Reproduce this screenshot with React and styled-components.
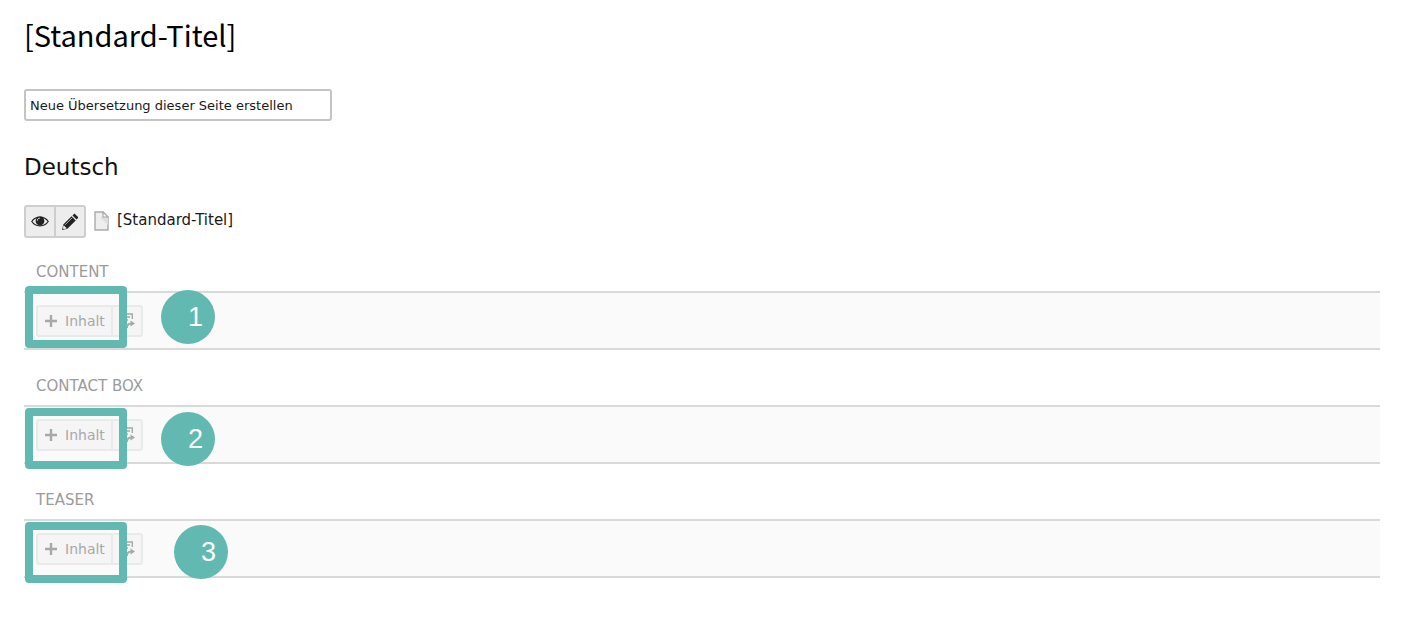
import styled, { createGlobalStyle, ThemeProvider } from 'styled-components';

const theme = {
  text: '#1a1a1a',
  muted: '#9b9b9b',
  border: '#c4c4c4',
  line: '#d9d9d9',
  accent: '#61b9b1',
};

const GlobalStyle = createGlobalStyle`
  * {
    box-sizing: border-box;
  }

  body {
    background: #fff;
    color: ${theme.text};
    font-family: 'DejaVu Sans', Verdana, sans-serif;
    margin: 0;
  }
`;

const Page = styled.main`
  padding: 12px 42px 40px 24px;
`;

const Title = styled.h1`
  color: #000;
  font-family: 'Noto Sans CJK SC', sans-serif;
  font-size: 29px;
  font-weight: 400;
  line-height: 44px;
  margin: 0 0 33px;
`;

const LanguageSelect = styled.select`
  appearance: none;
  background: #fff;
  border: 2px solid ${({ theme }) => theme.border};
  border-radius: 3px;
  color: ${({ theme }) => theme.text};
  display: block;
  font-family: inherit;
  font-size: 13px;
  height: 32px;
  padding: 0 4px;
  width: 308px;
`;

const LanguageHeading = styled.h2`
  color: #111;
  font-size: 23px;
  font-weight: 400;
  line-height: 32px;
  margin: 30px 0 22px;
`;

const RecordRow = styled.div`
  align-items: center;
  display: flex;
  gap: 8px;
  margin-bottom: 18px;
`;

const RecordTitle = styled.span`
  font-size: 15px;
  line-height: 20px;
  padding-bottom: 4px;
`;

const ButtonGroup = styled.div`
  background: ${({ $muted }) => ($muted ? '#f5f5f5' : '#ededed')};
  border: 2px solid ${({ $muted }) => ($muted ? '#eaeaea' : '#cecece')};
  border-radius: 3px;
  display: inline-flex;
  height: ${({ $muted }) => ($muted ? 32 : 33)}px;

  button + button {
    border-left: 2px solid ${({ $muted }) => ($muted ? '#eaeaea' : '#cecece')};
  }
`;

const Button = styled.button`
  align-items: center;
  background: transparent;
  border: 0;
  color: ${({ $muted }) => ($muted ? '#a8a8a8' : '#222')};
  display: flex;
  font-family: inherit;
  font-size: ${({ $muted }) => ($muted ? 14 : 13)}px;
  gap: 7px;
  justify-content: center;
  padding: 0 ${({ $muted }) => ($muted ? 6 : 5)}px;
`;

const Column = styled.section`
  margin-bottom: 20px;
`;

const ColumnLabel = styled.h3`
  color: ${({ theme }) => theme.muted};
  font-size: 15px;
  font-weight: 400;
  line-height: 20px;
  margin: 0;
  padding: 6px 12px 9px;
`;

const ColumnBody = styled.div`
  background: #fafafa;
  border-bottom: 2px solid ${({ theme }) => theme.line};
  border-top: 2px solid ${({ theme }) => theme.line};
  display: flex;
  height: 59px;
  padding: 12px;
  position: relative;
`;

const Highlight = styled.div`
  border: 8px solid ${({ theme }) => theme.accent};
  border-radius: 4px;
  height: ${({ $height }) => $height}px;
  left: 1px;
  pointer-events: none;
  position: absolute;
  top: ${({ $top }) => $top}px;
  width: 102px;
`;

const Marker = styled.span`
  align-items: center;
  background: ${({ theme }) => theme.accent};
  border-radius: 50%;
  color: #fff;
  display: flex;
  font-family: 'Liberation Sans', Arial, sans-serif;
  font-size: 27px;
  height: 54px;
  justify-content: center;
  left: ${({ $left }) => $left}px;
  padding-left: 15px;
  position: absolute;
  top: ${({ $top }) => $top}px;
  width: 54px;
`;

const EyeIcon = () => (
  <svg width="18" height="18" viewBox="0 0 18 18" aria-hidden="true">
    <path d="M.8 8.5C4.6 2.7 13.4 2.7 17.2 8.5 13.4 14.3 4.6 14.3.8 8.5Z" fill="#ededed" stroke="currentColor" strokeWidth="1.2" />
    <circle cx="9" cy="7.9" r="4.4" fill="currentColor" />
    <path d="M6.3 7.7c0-1.5 1-2.5 2.5-2.5" fill="none" stroke="#ededed" />
  </svg>
);

const PencilIcon = () => (
  <svg width="18" height="18" viewBox="0 0 18 18" aria-hidden="true">
    <path d="m1 17 1.3-5.4 8.3-8.3 4.1 4.1-8.3 8.3ZM11.5 2.4l1.2-1.2c.5-.5 1-.5 1.5 0l2.6 2.6c.5.5.5 1 0 1.5l-1.2 1.2Z" fill="currentColor" />
    <path d="m4.1 11.8 7-7M2.8 12.7l2.5 2.5-2.6.7-.6-.6Z" fill="#ededed" stroke="#ededed" strokeWidth=".7" />
  </svg>
);

const PageIcon = () => (
  <svg width="15" height="22" viewBox="0 0 15 22" aria-hidden="true">
    <path d="M1 1h8l5 5v13H1Z" fill="#eee" stroke="#aaa" strokeWidth="1.4" />
    <path d="m6 6 8 8V6Z" fill="#ddd" />
    <path d="M9 1v5h5Z" fill="#fff" stroke="#aaa" strokeWidth="1.2" />
  </svg>
);

const PlusIcon = () => (
  <svg width="14" height="14" viewBox="0 0 14 14" aria-hidden="true">
    <path d="M7 1v12M1 7h12" stroke="currentColor" strokeWidth="2.4" />
  </svg>
);

const PasteIcon = () => (
  <svg width="16" height="18" viewBox="0 0 16 18" fill="none" stroke="currentColor" aria-hidden="true">
    <path d="M6 14H1V2h12.3v5M3 5h8M3 8h6" strokeWidth="1.4" />
    <path d="M8 16c0-3 1-4.4 4-4.4" strokeWidth="1.8" />
    <path d="m11.5 8.6 4.5 3-4.5 3Z" fill="currentColor" stroke="none" />
  </svg>
);

const columns = [
  { label: 'CONTENT', top: -7, height: 62, marker: { left: 137, top: -3 } },
  { label: 'CONTACT BOX', top: 1, height: 61, marker: { left: 137, top: 5 } },
  { label: 'TEASER', top: 1, height: 61, marker: { left: 150, top: 4 } },
];

const ContentColumn = ({ label, top, height, marker, number }) => (
  <Column>
    <ColumnLabel>{label}</ColumnLabel>
    <ColumnBody>
      <ButtonGroup $muted>
        <Button type="button" $muted>
          <PlusIcon />
          Inhalt
        </Button>
        <Button type="button" aria-label="Einfügen" $muted>
          <PasteIcon />
        </Button>
      </ButtonGroup>
      <Highlight $top={top} $height={height} />
      <Marker $left={marker.left} $top={marker.top}>
        {number}
      </Marker>
    </ColumnBody>
  </Column>
);

const App = () => {
  return (
    <ThemeProvider theme={theme}>
      <GlobalStyle />
      <Page>
        <Title>[Standard-Titel]</Title>
        <LanguageSelect aria-label="Neue Übersetzung">
          <option>Neue Übersetzung dieser Seite erstellen</option>
        </LanguageSelect>
        <LanguageHeading>Deutsch</LanguageHeading>
        <RecordRow>
          <ButtonGroup>
            <Button type="button" aria-label="Anzeigen">
              <EyeIcon />
            </Button>
            <Button type="button" aria-label="Bearbeiten">
              <PencilIcon />
            </Button>
          </ButtonGroup>
          <PageIcon />
          <RecordTitle>[Standard-Titel]</RecordTitle>
        </RecordRow>
        {columns.map((column, index) => (
          <ContentColumn key={column.label} number={index + 1} {...column} />
        ))}
      </Page>
    </ThemeProvider>
  );
};

export default App;
